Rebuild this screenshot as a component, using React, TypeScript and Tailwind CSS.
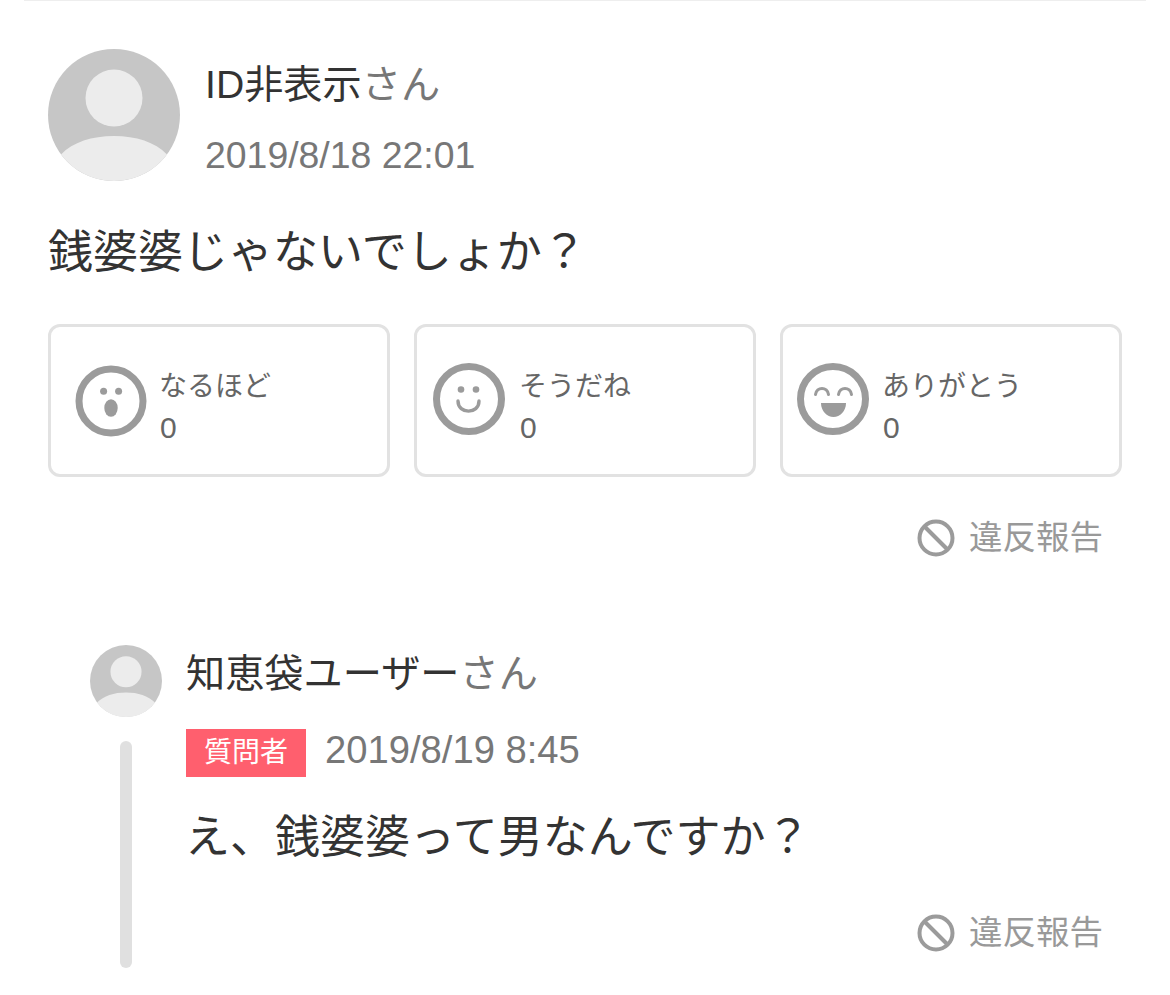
const FONT = "font-['Liberation_Sans','Noto_Sans_CJK_JP',sans-serif]";

function Avatar({ className }: { className: string }) {
  return (
    <svg viewBox="0 0 132 132" className={className}>
      <circle cx="66" cy="66" r="66" fill="#c6c6c6" />
      <circle cx="66" cy="49" r="28.5" fill="#ececec" />
      <path d="M13 105.5 C 25 93 44 87 66 87 C 88 87 107 93 119 105.5 A 66 66 0 0 1 66 132 A 66 66 0 0 1 13 105.5 Z" fill="#ececec" />
    </svg>
  );
}

function FaceSurprised() {
  return (
    <svg viewBox="0 0 72 72" className="w-[72px] h-[72px] shrink-0">
      <circle cx="36" cy="36" r="32" fill="none" stroke="#9b9b9b" strokeWidth="7" />
      <circle cx="28.6" cy="26.3" r="3.5" fill="#9b9b9b" />
      <circle cx="43.6" cy="26.3" r="3.5" fill="#9b9b9b" />
      <ellipse cx="36" cy="43" rx="6.7" ry="8.7" fill="#9b9b9b" />
    </svg>
  );
}

function FaceSmile() {
  return (
    <svg viewBox="0 0 72 72" className="w-[72px] h-[72px] shrink-0 -mt-[3px]">
      <circle cx="36" cy="36" r="32.5" fill="none" stroke="#9b9b9b" strokeWidth="7" />
      <circle cx="28" cy="26.5" r="3.3" fill="#9b9b9b" />
      <circle cx="43" cy="26.5" r="3.3" fill="#9b9b9b" />
      <path d="M25 38 C 25 51.5 46 51.5 46 38" fill="none" stroke="#9b9b9b" strokeWidth="3.4" strokeLinecap="round" />
    </svg>
  );
}

function FaceLaugh() {
  return (
    <svg viewBox="0 0 72 72" className="w-[72px] h-[72px] shrink-0 -mt-[3px]">
      <circle cx="36" cy="36" r="32.5" fill="none" stroke="#9b9b9b" strokeWidth="7" />
      <path d="M18.5 31.5 C 19.5 23.5 30.5 23.5 31.5 31.5" fill="none" stroke="#9b9b9b" strokeWidth="3" strokeLinecap="round" />
      <path d="M41.5 31.5 C 42.5 23.5 53.5 23.5 54.5 31.5" fill="none" stroke="#9b9b9b" strokeWidth="3" strokeLinecap="round" />
      <path d="M24 40 H49 C 49 48 43 54 36.5 54 C 30 54 24 48 24 40 Z" fill="#9b9b9b" />
    </svg>
  );
}

function Reaction({ face, label, pad }: { face: React.ReactNode; label: string; pad: string }) {
  return (
    <div className={`h-[153px] border-[3px] border-[#e2e2e2] rounded-xl flex items-center ${pad}`}>
      {face}
      <div className="text-[#666] text-[28px] leading-[42px] pt-[14px]">
        <div>{label}</div>
        <div className="text-[30px] -mt-[1px] pl-[1px]">0</div>
      </div>
    </div>
  );
}

function Report() {
  return (
    <div className="flex justify-end items-center gap-[14px] pr-[43px] text-[#999] text-[33.5px] leading-[40px]">
      <svg viewBox="0 0 38 38" className="w-[38px] h-[38px]">
        <circle cx="19" cy="19" r="16.5" fill="none" stroke="#9b9b9b" strokeWidth="4" />
        <path d="M7.5 7.5 L30.5 30.5" stroke="#9b9b9b" strokeWidth="4" />
      </svg>
      <span>違反報告</span>
    </div>
  );
}

export default function App() {
  return (
    <div className={`${FONT} w-[1170px] h-[995px] bg-white overflow-hidden px-[24px]`}>
      <div className="h-px bg-[#eeeeee]" />
      <div className="pl-[24px]">
        <div className="flex pt-[48px]">
          <Avatar className="w-[132px] h-[132px] shrink-0" />
          <div className="pl-[25px]">
            <div className="text-[39.2px] leading-[44px] pt-[14px] text-[#333]">
              ID非表示<span className="text-[#777]">さん</span>
            </div>
            <div className="text-[37.4px] leading-[44px] mt-[26px] text-[#777]">2019/8/18 22:01</div>
          </div>
        </div>
        <p className="text-[45px] leading-[60px] mt-[42px] text-[#333]">銭婆婆じゃないでしょか？</p>
        <div className="grid grid-cols-3 gap-[24px] mt-[41px] w-[1074px]">
          <Reaction face={<FaceSurprised />} label="なるほど" pad="pl-[24px] gap-[12px]" />
          <Reaction face={<FaceSmile />} label="そうだね" pad="pl-[16px] gap-[14px]" />
          <Reaction face={<FaceLaugh />} label="ありがとう" pad="pl-[14px] gap-[13px]" />
        </div>
        <div className="mt-[41px]">
          <Report />
        </div>
        <div className="flex mt-[87px]">
          <div className="w-[72px] ml-[42px] flex flex-col items-center shrink-0">
            <Avatar className="w-[72px] h-[72px]" />
            <div className="w-[12px] h-[227px] mt-[24px] rounded-full bg-[#e0e0e0]" />
          </div>
          <div className="flex-1 pl-[24px]">
            <div className="text-[39.2px] leading-[44px] pt-[7px] text-[#333]">
              知恵袋ユーザー<span className="text-[#777]">さん</span>
            </div>
            <div className="flex items-center mt-[32px] gap-[19px]">
              <span className="w-[120px] h-[48px] bg-[#ff5f6e] text-white text-[28px] flex items-center justify-center">質問者</span>
              <span className="text-[38.2px] leading-[44px] text-[#777] mb-[6px]">2019/8/19 8:45</span>
            </div>
            <p className="text-[45px] leading-[60px] mt-[30px] -ml-[1px] text-[#333]">え、銭婆婆って男なんですか？</p>
            <div className="mt-[45px]">
              <Report />
            </div>
          </div>
        </div>
      </div>
    </div>
  );
}
